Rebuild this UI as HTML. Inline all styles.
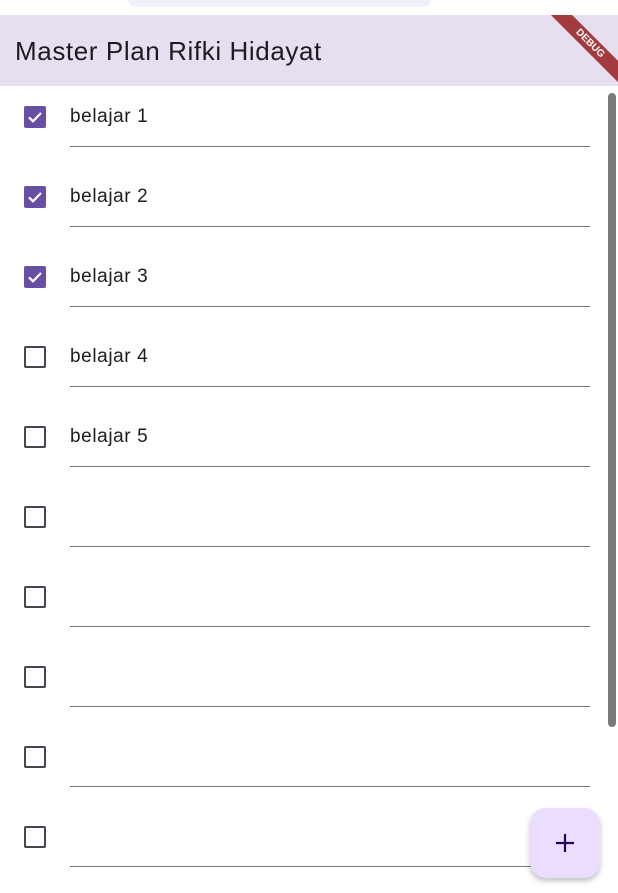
<!DOCTYPE html>
<html><head><style>
body{margin:0;width:618px;height:893px;overflow:hidden;background:#fff;font-family:"Liberation Sans",sans-serif;position:relative}
.pill{position:absolute;left:128px;top:-10px;width:303px;height:17px;background:#edf1f9;border-radius:10px}
.bar{position:absolute;left:0;top:15px;width:618px;height:71px;background:#e7deef;overflow:hidden}
.bar h1{margin:0;position:absolute;left:15px;top:21px;font-weight:normal;font-size:26px;color:#1d1b20;letter-spacing:0.6px}
.ribbon{position:absolute;left:520px;top:21px;width:140px;height:15px;background:#a33a3e;transform:rotate(45deg);color:#fff;font-size:10px;font-weight:bold;text-align:center;line-height:15px}
.cb{position:absolute;left:24px;width:22px;height:22px;border:2px solid #49454f;border-radius:2px;box-sizing:border-box}
.cb.on{background:#6750a4;border-color:#6750a4}
.cb svg{position:absolute}
.t{position:absolute;left:70px;font-size:19px;letter-spacing:0.6px;color:#1d1b20}
.ln{position:absolute;left:70px;width:520px;height:1px;background:#79767d}
.sb{position:absolute;left:608px;top:93px;width:8px;height:634px;background:#7b797e;border-radius:4px}
.fab{position:absolute;left:530px;top:808px;width:70px;height:70px;background:#eaddff;border-radius:16px;box-shadow:0 3px 6px rgba(0,0,0,.25)}
</style></head><body>
<div class="pill"></div>
<div class="bar"><h1>Master Plan Rifki Hidayat</h1><div class="ribbon">DEBUG</div></div>
<div id="rows"></div>
<div class="sb"></div>
<div class="fab"><svg width="70" height="70"><path d="M35 26v18M26 35h18" stroke="#21005d" stroke-width="2.2"/></svg></div>
<script>
var h='';var labels=['belajar 1','belajar 2','belajar 3','belajar 4','belajar 5','','','','',''];
for(var i=0;i<10;i++){var y=86+i*80;var on=i<3;
h+='<div class="cb'+(on?' on':'')+'" style="top:'+(y+20)+'px">'+(on?'<svg width="22" height="22" viewBox="0 0 22 22" style="left:-2px;top:-2px"><path d="M5 11.3l4 4 8-8.3" fill="none" stroke="#fff" stroke-width="2.2"/></svg>':'')+'</div>';
if(labels[i])h+='<div class="t" style="top:'+(y+20)+'px">'+labels[i]+'</div>';
h+='<div class="ln" style="top:'+(y+60)+'px"></div>';}
document.getElementById('rows').innerHTML=h;
</script>
</body></html>
